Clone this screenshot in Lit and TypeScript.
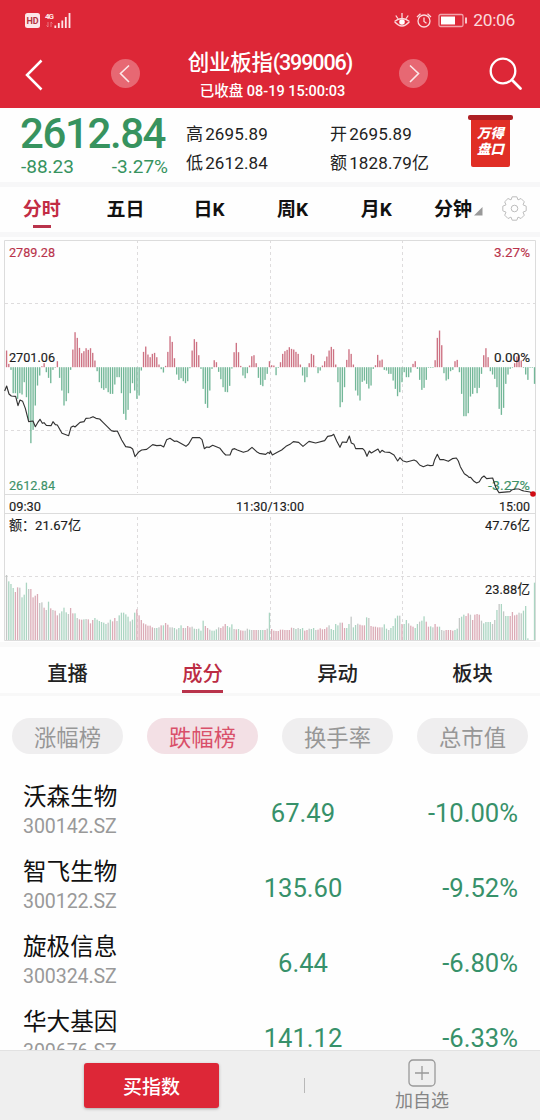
import { LitElement, html, svg, css } from 'lit'
import { customElement, property } from 'lit/decorators.js'
import { classMap } from 'lit/directives/class-map.js'

// 每分钟的动能柱，正数为红，负数为绿
const MOMENTUM = [
    50, 10, -8, -78, -78, -95, -78, -82, -45, -90, -160, -228, -188, -115, -55, -25, 3, 12, -15, -32,
    -48, -8, 0, 18, -32, -70, -115, -102, -78, -8, 53, 105, 88, 58, 42, 48, 57, 52, 57, 43,
    20, -12, -45, -63, -68, -63, -75, -80, -80, -52, -30, -30, -78, -140, -158, -128, -78, -48, -70, -95,
    -85, -10, 46, 62, 38, 30, 40, 43, 30, 8, -6, -16, 4, 46, 93, 76, 27, -22, -38, -33,
    -42, -48, -42, -3, 50, 84, 76, 36, -5, -65, -110, -122, -70, -5, 21, 15, -14, -36, -60, -74,
    -75, -56, -4, 45, 73, 45, 4, -25, -33, -18, 5, 33, 36, 12, -32, -53, -57, -38, -20, 18,
    6, 5, -24, -2, 15, 40, 48, 52, 60, 55, 53, 46, 40, 8, -25, -45, -30, 12, 40, 36,
    2, -18, -10, 5, 18, 32, 50, 61, 54, 8, -45, -120, -105, -60, 22, 54, 40, 8, -70, -85,
    -100, -44, -40, -50, -64, -55, -5, 6, 37, 20, 23, -8, -10, -20, -20, -40, -65, -87, -75, -45,
    -15, -30, -30, -16, 10, 18, -5, -38, -68, -62, -38, 0, -2, 0, 21, 88, 110, 66, -18, -40,
    -36, -12, -8, 18, 22, -15, -80, -147, -147, -138, -88, -80, -62, -78, -62, -20, 36, 57, 30, -12,
    -22, -35, -60, -125, -143, -122, -50, -22, -5, 0, 12, 32, 36, 20, -2, -22, -38, 0, 0, -50
]

const VOLUME = [
    195, 176, 168, 156, 144, 158, 157, 128, 136, 172, 153, 153, 128, 133, 138, 111, 113, 97, 90, 115,
    95, 90, 88, 74, 80, 86, 97, 83, 78, 96, 80, 80, 66, 62, 61, 62, 63, 62, 50, 60,
    66, 61, 57, 54, 52, 48, 52, 61, 56, 66, 57, 74, 82, 82, 77, 70, 56, 61, 82, 92,
    74, 60, 50, 47, 43, 43, 38, 36, 36, 38, 44, 44, 51, 46, 38, 38, 36, 32, 36, 44,
    36, 36, 42, 38, 40, 34, 33, 34, 28, 58, 42, 36, 31, 28, 28, 32, 38, 36, 41, 48,
    42, 38, 47, 33, 32, 33, 29, 28, 28, 34, 31, 30, 30, 30, 30, 30, 30, 30, 34, 82,
    33, 28, 27, 27, 31, 31, 30, 30, 30, 37, 36, 33, 36, 33, 36, 28, 30, 34, 33, 36,
    30, 31, 35, 32, 33, 38, 44, 33, 30, 48, 44, 52, 52, 36, 36, 48, 70, 38, 45, 49,
    46, 44, 44, 68, 66, 42, 40, 40, 38, 38, 38, 47, 34, 30, 36, 42, 65, 73, 73, 48,
    48, 60, 50, 43, 40, 36, 48, 55, 58, 71, 55, 40, 41, 38, 48, 40, 40, 30, 28, 30,
    30, 30, 28, 30, 34, 66, 70, 76, 72, 80, 76, 60, 76, 78, 76, 58, 50, 54, 54, 54,
    48, 60, 90, 108, 108, 86, 72, 72, 72, 84, 74, 76, 82, 80, 88, 102, 5, 0, 0, 172
]

// r 涨 g 跌 n 平
const VOLUME_KIND =
    'ngggrrngggnrrrrnnrngrnrrngggnrrgnrrgnrrrggggggngrrngggggnggr' +
    'rrrrrrrngnrgrrnngnggrnrrngngggrrngggnrrrgggnrgrrnngnrrnggrng' +
    'rrrrrrrrrrngnggrrnggnrrrrrnggggnrrggnggnrrrgnrrrrrnggnggggnr' +
    'ggnrrggnggrrgnrrgnnrrrrggnggrrnrrrrnggggnngngnggrrrrnngggngg'

const PRICE =
    '14,468 20,453 27,477 34,483 47,484 54,512 60,495 68,499 76,520 86,560 99,558 106,575 113,563 120,553 127,565 132,563 139,571 153,572 159,560 166,569 172,570 186,595 206,602 213,577 220,573 225,576 240,562 252,560 258,550 270,549 279,545 288,550 299,552 309,562 334,587 342,589 352,588 365,615 377,635 391,637 398,642 405,665 417,650 425,645 440,643 458,629 470,632 482,631 491,636 500,614 510,610 523,619 530,618 558,634 566,627 577,608 599,608 606,614 613,641 620,636 628,637 638,631 660,640 670,653 677,660 690,660 697,643 704,641 712,645 730,652 743,648 756,637 770,650 778,655 797,658 804,652 809,656 811,648 817,660 832,652 845,645 858,634 870,628 880,620 896,622 909,634 927,619 947,624 974,617 983,604 995,602 1001,598 1010,618 1020,637 1027,621 1040,622 1048,603 1054,624 1062,628 1067,641 1088,641 1094,647 1101,664 1108,648 1114,654 1134,642 1140,653 1146,646 1154,651 1168,652 1182,660 1193,678 1200,668 1208,677 1220,681 1242,675 1250,679 1259,690 1270,695 1283,690 1290,692 1299,691 1304,674 1312,658 1320,674 1332,674 1345,679 1357,671 1369,669 1375,678 1381,695 1393,716 1402,722 1407,727 1412,727 1422,739 1430,744 1438,740 1445,728 1452,723 1460,731 1478,729 1488,759 1497,773 1530,770 1535,765 1545,762 1556,762 1565,766 1572,768 1590,771 1598,776'

@customElement('x-trend-chart')
export class XTrendChart extends LitElement {
    static styles = css`
        :host {
            display: block;
            height: 407px;
            margin-top: -2px;
        }

        svg {
            display: block;
        }

        text {
            font: 400 13.6px Roboto, 'Noto Sans CJK SC', sans-serif;
            fill: #1c1c1c;
            stroke: #1c1c1c;
            stroke-width: 0.15;
        }

        .frame {
            fill: none;
            stroke: #dcdcdc;
        }

        .dash {
            stroke: #dedcdd;
            stroke-dasharray: 3 3;
        }

        .red {
            fill: #b9334b;
            stroke: #b9334b;
        }

        .green {
            fill: #3d9168;
            stroke: #3d9168;
        }

        .up {
            fill: #cd7283;
        }

        .down {
            fill: #73b798;
        }

        .r {
            fill: #dbabb6;
        }

        .g {
            fill: #abd5c2;
        }

        .n {
            fill: #c4c8c6;
        }

        .price {
            fill: none;
            stroke: #333;
            stroke-width: 3.4;
            stroke-linejoin: round;
        }

        .now {
            fill: #d00b13;
        }
    `

    barX(i) {
        return 5.9 + i * 2.209
    }

    renderMomentum() {
        return MOMENTUM.map((v, i) => {
            const h = Math.max(Math.abs(v) / 3, 0.6)
            return svg`<rect class=${v > 0 ? 'up' : 'down'} x=${this.barX(i)} y=${v > 0 ? 132.2 - h : 132.2} width="1.35" height=${h} />`
        })
    }

    renderVolume() {
        return VOLUME.map(
            (v, i) =>
                svg`<rect class=${VOLUME_KIND[i]} x=${this.barX(i)} y=${405 - v / 3} width="1.3" height=${v / 3} />`
        )
    }

    label(x, y, w, text, cls = '') {
        return svg`<text class=${cls} x=${x} y=${y} textLength=${w} lengthAdjust="spacingAndGlyphs">${text}</text>`
    }

    render() {
        return html`
            <svg width="540" height="407" viewBox="0 0 540 407">
                <path class="dash" d="M5 68.5H535M5 195.5H535M5 341.5H535" />
                <path
                    class="dash"
                    d="M137.5 5V258M270.5 5V258M402.5 5V258M137.5 282V405M270.5 282V405M402.5 282V405"
                />
                <path class="frame" d="M4.5 5.5H535.5V405.5H4.5ZM4.5 259.5H535.5M4.5 278.5H535.5" />
                ${this.renderMomentum()} ${this.renderVolume()}
                ${this.label(9, 21.5, 46, '2789.28', 'red')}
                ${this.label(494, 21.5, 36, '3.27%', 'red')}
                ${this.label(9, 127.3, 46, '2701.06')}
                ${this.label(494, 127.3, 36, '0.00%')}
                ${this.label(9, 255, 46, '2612.84', 'green')}
                ${this.label(488, 255, 42, '-3.27%', 'green')}
                <g transform="scale(.33333)">
                    <polyline class="price" points=${PRICE} />
                </g>
                <circle class="now" cx="533" cy="259" r="2.8" />
                ${this.label(9, 275.5, 32, '09:30')}
                ${this.label(236, 275.5, 68, '11:30/13:00')}
                ${this.label(499, 275.5, 31, '15:00')}
                ${this.label(9, 294.5, 72, '额：21.67亿')}
                ${this.label(485, 294.5, 45, '47.76亿')}
                ${this.label(485, 358.5, 45, '23.88亿')}
            </svg>
        `
    }
}

@customElement('x-stock-row')
export class XStockRow extends LitElement {
    static styles = css`
        :host {
            display: flex;
            align-items: flex-start;
            box-sizing: border-box;
            height: 75px;
            padding: 0 22px 0 23px;
            font-family: Roboto, 'Noto Sans CJK SC', sans-serif;
        }

        .stock {
            width: 210px;
        }

        .name {
            font-size: 23.6px;
            line-height: 32px;
            color: #111;
        }

        .code {
            font-size: 19.6px;
            line-height: 27px;
            letter-spacing: -0.1px;
            color: #999;
        }

        .num {
            padding-top: 15px;
            font-size: 25.6px;
            line-height: 34px;
            color: #37916a;
        }

        .cost {
            width: 140px;
            text-align: center;
        }

        .rate {
            flex: 1;
            text-align: right;
        }
    `

    @property() name = ''
    @property() code = ''
    @property() cost = ''
    @property() rate = ''

    render() {
        return html`
            <div class="stock">
                <div class="name">${this.name}</div>
                <div class="code">${this.code}</div>
            </div>
            <div class="num cost">${this.cost}</div>
            <div class="num rate">${this.rate}</div>
        `
    }
}

@customElement('app-root')
export class AppRoot extends LitElement {
    static styles = css`
        :host {
            display: flex;
            flex-direction: column;
            height: 1120px;
            width: 540px;
            overflow: hidden;
            background: #fefefe;
            color: #222;
            font-family: Roboto, 'Noto Sans CJK SC', sans-serif;
            white-space: nowrap;
        }

        svg {
            display: block;
            fill: none;
        }

        .top {
            flex: none;
            height: 108px;
            background: #dd2737;
            color: #fff;
        }

        .status {
            display: flex;
            align-items: center;
            height: 40px;
            padding: 0 25px 0 25px;
        }

        .status .clock {
            margin-left: 5px;
            font-size: 17.4px;
            line-height: 40px;
            letter-spacing: -0.3px;
            color: #fbdadd;
        }

        .space {
            flex: 1;
        }

        .nav {
            display: grid;
            grid-template-columns: 70px 110px 180px 106px 74px;
            height: 68px;
        }

        .nav svg {
            margin-top: 16px;
        }

        .nav .back {
            margin-left: 24px;
        }

        .nav .prev {
            margin: 18px 0 0 40px;
        }

        .nav .next {
            margin: 18px 0 0 38px;
        }

        .nav .find {
            margin-left: 22px;
        }

        .title {
            padding-top: 7px;
            text-align: center;
            font-size: 21.5px;
            font-weight: 500;
            line-height: 32px;
            letter-spacing: -1.1px;
        }

        .title .cn {
            letter-spacing: -0.3px;
        }

        .sub {
            text-align: center;
            font-size: 14.5px;
            font-weight: 500;
            line-height: 26px;
            margin-left: 5px;
        }

        .quote {
            flex: none;
            display: flex;
            height: 74px;
        }

        .last {
            width: 147px;
            padding: 4px 18px 0 21px;
            color: #37935f;
        }

        .last .big {
            font-size: 42px;
            font-weight: 500;
            line-height: 44px;
            letter-spacing: -1.4px;
            margin-left: -1px;
        }

        .last .diff {
            display: flex;
            justify-content: space-between;
            font-size: 19px;
            line-height: 21px;
        }

        .pair {
            width: 144px;
            padding-top: 12px;
            font-size: 17px;
            line-height: 29px;
            letter-spacing: 0.15px;
        }

        .pair i {
            font-style: normal;
            margin-right: 2px;
        }

        .flag {
            width: 45px;
            margin: 7px 0 0 -6px;
        }

        .flag .bar {
            height: 5px;
            border-radius: 2px;
            background: #ae2024;
        }

        .flag .cloth {
            height: 47px;
            margin: 0 3px;
            border-radius: 0 0 2px 2px;
            box-sizing: border-box;
            padding-top: 6px;
            background: #e02e25;
            color: #fff;
            font-size: 13.4px;
            font-weight: 800;
            font-style: italic;
            line-height: 16px;
            text-align: center;
        }

        .gap {
            flex: none;
            height: 5px;
            background: #f7f7f8;
        }

        .periods {
            flex: none;
            display: grid;
            grid-template-columns: repeat(6, 83.6px) 1fr;
            height: 45px;
            font-size: 19px;
            font-weight: 700;
            color: #111;
        }

        .period {
            display: flex;
            flex-direction: column;
            align-items: center;
            padding-top: 1.5px;
            line-height: 42px;
        }

        .period.on {
            color: #c22c44;
        }

        .period.on::after {
            content: '';
            width: 18px;
            height: 3px;
            margin-top: -6px;
            background: #b9334b;
        }

        .period.more {
            flex-direction: row;
            align-items: flex-start;
            margin-left: 16px;
        }

        .period.more svg {
            margin: 18px 0 0 2px;
        }

        .gear {
            margin: 8px 0 0 -1px;
        }

        .tabs {
            flex: none;
            display: grid;
            grid-template-columns: repeat(4, 1fr);
            height: 46px;
            border-top: 5px solid #f9f9f9;
            border-bottom: 3px solid #f8f8f8;
            box-sizing: content-box;
            font-size: 20.3px;
            font-weight: 500;
            line-height: 54px;
            text-align: center;
        }

        .tab span {
            display: inline-block;
            height: 43px;
        }

        .tab.on {
            color: #bc2c44;
        }

        .tab.on span {
            box-shadow: 0 3px #b9334b;
        }

        .pills {
            flex: none;
            display: flex;
            gap: 24px;
            padding: 22px 12px 27px;
        }

        .pill {
            width: 111px;
            border-radius: 18px;
            background: #efeeef;
            color: #979797;
            font-size: 22.3px;
            line-height: 40px;
            height: 36px;
            text-align: center;
        }

        .pill.on {
            background: #f3e0e5;
            color: #d9506a;
        }

        .list {
            flex: 1;
            min-height: 0;
            overflow: hidden;
        }

        .foot {
            flex: none;
            display: flex;
            align-items: center;
            height: 69px;
            border-top: 1px solid #e2e2e2;
            background: #efefef;
        }

        .buy {
            width: 135px;
            height: 45px;
            margin-left: 84px;
            border-radius: 3px;
            background: #dd2737;
            box-shadow: 0 1px 3px #aaa;
            color: #fff;
            font-size: 19px;
            font-weight: 500;
            line-height: 49px;
            text-align: center;
        }

        .sep {
            width: 1px;
            height: 15px;
            margin-left: 85px;
            background: #b8b8b8;
        }

        .add {
            width: 80px;
            margin-left: 77px;
            font-size: 18px;
            line-height: 24px;
            text-align: center;
            color: #858585;
        }

        .add svg {
            margin: 1px auto 2px;
        }
    `

    periods = ['分时', '五日', '日K', '周K', '月K']
    tabs = ['直播', '成分', '异动', '板块']
    pills = ['涨幅榜', '跌幅榜', '换手率', '总市值']
    stocks = [
        { name: '沃森生物', code: '300142.SZ', cost: '67.49', rate: '-10.00%' },
        { name: '智飞生物', code: '300122.SZ', cost: '135.60', rate: '-9.52%' },
        { name: '旋极信息', code: '300324.SZ', cost: '6.44', rate: '-6.80%' },
        { name: '华大基因', code: '300676.SZ', cost: '141.12', rate: '-6.33%' }
    ]

    renderStatus() {
        return html`
            <div class="status">
                <svg width="50" height="18" viewBox="0 0 50 18">
                    <rect y="2" width="15" height="15" rx="2.5" fill="#fde6e8" />
                    <text x="1.5" y="13" font-size="9" font-weight="700" textLength="12" fill="#b33340">HD</text>
                    <text x="20" y="8" font-size="8" font-weight="700" textLength="9" fill="#fde6e8">4G</text>
                    <path d="M23 11v5m-1.5-1.5l1.5 1.5M26 16v-5m1.5 1.5L26 11" stroke="#ee8e96" stroke-width=".8" />
                    <path
                        d="M30.3 17v-2.5M33.8 17v-5M37.3 17V9.5M40.8 17V6M44.5 17V2"
                        stroke="#fde6e8"
                        stroke-width="1.8"
                    />
                </svg>
                <div class="space"></div>
                <svg width="75" height="18" viewBox="0 0 75 18" stroke="#fbdadd" stroke-width="1.3">
                    <path
                        d="M1.5 10.500Q9 4.500 16.500 10.500M1.500 10.500Q9 19.500 16.500 10.500M9 7V2M4.800 7.500L2.800 4.500M13.200 7.500L15.200 4.500"
                    />
                    <circle cx="9" cy="11" r="2.8" fill="#fff" stroke="none" />
                    <circle cx="31" cy="10" r="6" />
                    <path d="M31 6.5v4l2.500 1.800M24 6L27.500 2.800M38 6L34.500 2.800" />
                    <rect x="46" y="3.5" width="24" height="12" rx="1.5" stroke="#f2a3aa" />
                    <rect x="48" y="5.5" width="14" height="8" fill="#fff" stroke="none" />
                    <path d="M73 6.5v6" stroke-width="1.8" />
                </svg>
                <div class="clock">20:06</div>
            </div>
        `
    }

    renderHeader() {
        return html`
            <div class="top">
                ${this.renderStatus()}
                <div class="nav">
                    <svg class="back" width="22" height="38" viewBox="0 0 22 38">
                        <path d="M17.5 4.5L3 19L17.5 33.5" stroke="#fff" stroke-width="2.5" />
                    </svg>
                    <svg class="prev" width="31" height="31" viewBox="0 0 31 31">
                        <circle cx="15.5" cy="15.5" r="14.5" fill="#e76873" />
                        <path d="M19 7.5L10.5 15.5L19 24" stroke="#fff" stroke-opacity=".85" stroke-width="1.6" />
                    </svg>
                    <div>
                        <div class="title"><span class="cn">创业板指</span>(399006)</div>
                        <div class="sub">已收盘 08-19 15:00:03</div>
                    </div>
                    <svg class="next" width="31" height="31" viewBox="0 0 31 31">
                        <circle cx="15.5" cy="15.5" r="14.5" fill="#e76873" />
                        <path d="M12 7.5L20.5 15.5L12 24" stroke="#fff" stroke-opacity=".85" stroke-width="1.6" />
                    </svg>
                    <svg class="find" width="36" height="36" viewBox="0 0 36 36" stroke="#fff" stroke-width="2.3">
                        <circle cx="15" cy="15" r="12.3" />
                        <path d="M24 24L32.5 32.5" stroke-width="2.8" stroke-linecap="round" />
                    </svg>
                </div>
            </div>
        `
    }

    renderQuote() {
        return html`
            <div class="quote">
                <div class="last">
                    <div class="big">2612.84</div>
                    <div class="diff"><span>-88.23</span><span>-3.27%</span></div>
                </div>
                <div class="pair">
                    <div><i>高</i>2695.89</div>
                    <div><i>低</i>2612.84</div>
                </div>
                <div class="pair">
                    <div><i>开</i>2695.89</div>
                    <div><i>额</i>1828.79亿</div>
                </div>
                <div class="flag">
                    <div class="bar"></div>
                    <div class="cloth">万得<br />盘口</div>
                </div>
            </div>
        `
    }

    renderPeriods() {
        return html`
            <div class="periods">
                ${this.periods.map(
                    (p, i) => html`<div class=${classMap({ period: true, on: i === 0 })}>${p}</div>`
                )}
                <div class="period more">
                    分钟
                    <svg width="9" height="9" viewBox="0 0 9 9"><path d="M8.5 0V8.5H0Z" fill="#999" /></svg>
                </div>
                <svg class="gear" width="27" height="27" viewBox="0 0 27 27" stroke="#bdbdbd">
                    <path
                        d="M11.2 1.800H15.800L17 4.900L20 3.500L23.300 6.800L22 9.800L25.200 11.200V15.800L22 17.200L23.300 20.200L20 23.500L17 22.100L15.800 25.200H11.200L10 22.100L7 23.500L3.700 20.200L5 17.200L1.800 15.800V11.200L5 9.800L3.700 6.800L7 3.500L10 4.900Z"
                        stroke-linejoin="round"
                    />
                    <circle cx="13.5" cy="13.5" r="3.3" />
                </svg>
            </div>
        `
    }

    render() {
        return html`
            ${this.renderHeader()} ${this.renderQuote()}
            <div class="gap"></div>
            ${this.renderPeriods()}
            <div class="gap"></div>
            <x-trend-chart></x-trend-chart>
            <div class="tabs">
                ${this.tabs.map(
                    (t, i) => html`<div class=${classMap({ tab: true, on: i === 1 })}><span>${t}</span></div>`
                )}
            </div>
            <div class="pills">
                ${this.pills.map((p, i) => html`<div class=${classMap({ pill: true, on: i === 1 })}>${p}</div>`)}
            </div>
            <div class="list">
                ${this.stocks.map(
                    s =>
                        html`<x-stock-row
                            name=${s.name}
                            code=${s.code}
                            cost=${s.cost}
                            rate=${s.rate}
                        ></x-stock-row>`
                )}
            </div>
            <div class="foot">
                <div class="buy">买指数</div>
                <div class="sep"></div>
                <div class="add">
                    <svg width="28" height="28" viewBox="0 0 28 28" stroke="#999" stroke-width="1.3">
                        <rect x="1" y="1" width="26" height="26" rx="4" />
                        <path d="M14 7V21M7 14H21" />
                    </svg>
                    加自选
                </div>
            </div>
        `
    }
}
